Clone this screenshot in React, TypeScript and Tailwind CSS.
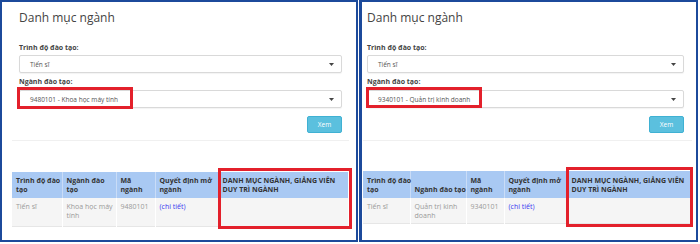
import React from 'react';

type PanelProps = {
  panelClass: string;
  formClass: string;
  tableWrapClass: string;
  tableClass: string;
  headClass: string;
  rowClass: string;
  cols: string[];
  headers: string[][];
  row: string[][];
  major: string;
  selectMark: string;
  tableMark: string;
};

const font = { fontFamily: '"Open Sans", "Noto Sans", Arial, sans-serif' };

function Caret() {
  return (
    <svg width="5" height="3" viewBox="0 0 5 3" className="shrink-0">
      <path d="M0 0 L5 0 L2.5 3 Z" fill="#444" />
    </svg>
  );
}

function SelectBox({ value }: { value: string }) {
  return (
    <div className="flex h-[18px] items-center justify-between rounded-[2px] border border-[#d9d9d9] bg-white pl-[10px] pr-[7px] shadow-[0_1px_1px_rgba(0,0,0,0.05)]">
      <span className="text-[6.5px] leading-[9px] text-[#555]">{value}</span>
      <Caret />
    </div>
  );
}

function Panel(p: PanelProps) {
  return (
    <div className={`relative h-[242px] shrink-0 border-[#1c4a9b] bg-white ${p.panelClass}`}>
      <div className={`flex flex-col pt-[8px] ${p.formClass}`}>
        <h1 className="text-[12px] leading-[16px] font-normal text-[#444]">Danh mục ngành</h1>
        <label className="mt-[17px] text-[7px] leading-[9px] font-bold text-[#444]">Trình độ đào tạo:</label>
        <div className="mt-[3px]">
          <SelectBox value="Tiến sĩ" />
        </div>
        <label className="mt-[4px] text-[7px] leading-[9px] font-bold text-[#444]">Ngành đào tạo:</label>
        <div className="mt-[4px]">
          <SelectBox value={p.major} />
        </div>
        <button className="mt-[8px] flex h-[17px] w-[35px] items-center justify-center self-end rounded-[2px] border border-[#3fb1d3] bg-[#5bc0de] text-[6.5px] text-white">
          Xem
        </button>
      </div>
      <div className={p.tableWrapClass}>
        <div className="mt-[7px] h-px bg-[#f0f0f0]" />
        <table className={`table-fixed border-collapse ${p.tableClass}`}>
          <colgroup>
            {p.cols.map((c, i) => (
              <col key={i} className={c} />
            ))}
          </colgroup>
          <thead>
            <tr className={`bg-[#a9c9f3] ${p.headClass}`}>
              {p.headers.map((lines, i) => (
                <th
                  key={i}
                  className="border-r border-[#c9dcf7] px-[4px] pb-[4px] text-left align-bottom text-[7px] leading-[9px] font-bold whitespace-nowrap text-[#333] last:border-r-0"
                >
                  {lines.map((l, j) => (
                    <div key={j}>{l}</div>
                  ))}
                </th>
              ))}
            </tr>
          </thead>
          <tbody>
            <tr className={`border-b border-[#e6e6e6] bg-[#f5f5f5] ${p.rowClass}`}>
              {p.row.map((lines, i) => (
                <td
                  key={i}
                  className={`border-r border-white px-[4px] pt-[4px] align-top text-[7px] leading-[9px] whitespace-nowrap last:border-r-0 ${
                    i === 3 ? 'text-[#3a3af0]' : 'text-[#9a9a9a]'
                  }`}
                >
                  {lines.map((l, j) => (
                    <div key={j}>{l}</div>
                  ))}
                </td>
              ))}
            </tr>
          </tbody>
        </table>
      </div>
      <div className={`pointer-events-none absolute border-[3px] border-[#e3202b] ${p.selectMark}`} />
      <div className={`pointer-events-none absolute border-[3px] border-[#e3202b] ${p.tableMark}`} />
    </div>
  );
}

export default function App() {
  return (
    <div className="flex h-[244px] w-[700px] bg-white" style={font}>
      <Panel
        panelClass="w-[358px] border-2"
        formClass="pl-[17px] pr-[14px]"
        tableWrapClass="pl-[10px] pr-[7px]"
        tableClass="mt-[31px] w-[336px]"
        headClass="h-[26px]"
        rowClass="h-[28px]"
        cols={['w-[50px]', 'w-[54px]', 'w-[39px]', 'w-[63px]', 'w-[130px]']}
        headers={[
          ['Trình độ đào', 'tạo'],
          ['Ngành đào', 'tạo'],
          ['Mã', 'ngành'],
          ['Quyết định mở', 'ngành'],
          ['DANH MỤC NGÀNH, GIẢNG VIÊN', 'DUY TRÌ NGÀNH'],
        ]}
        row={[['Tiến sĩ'], ['Khoa học máy', 'tính'], ['9480101'], ['(chi tiết)'], ['']]}
        major="9480101 - Khoa học máy tính"
        selectMark="left-[15px] top-[85px] h-[22px] w-[116px]"
        tableMark="left-[216px] top-[166px] h-[61px] w-[134px]"
      />
      <Panel
        panelClass="ml-px w-[339px] border-2 border-l-[3px]"
        formClass="pl-[5px] pr-[12px]"
        tableWrapClass="pl-[1px] pr-[4px]"
        tableClass="mt-[30px] w-[329px]"
        headClass="h-[27px]"
        rowClass="h-[25px]"
        cols={['w-[47px]', 'w-[56px]', 'w-[38px]', 'w-[63px]', 'w-[125px]']}
        headers={[
          ['Trình độ đào', 'tạo'],
          ['Ngành đào tạo'],
          ['Mã', 'ngành'],
          ['Quyết định mở', 'ngành'],
          ['DANH MỤC NGÀNH, GIẢNG VIÊN', 'DUY TRÌ NGÀNH'],
        ]}
        row={[['Tiến sĩ'], ['Quản trị kinh', 'doanh'], ['9340101'], ['(chi tiết)'], ['']]}
        major="9340101 - Quản trị kinh doanh"
        selectMark="left-[4px] top-[85px] h-[21px] w-[116px]"
        tableMark="left-[204px] top-[165px] h-[60px] w-[127px]"
      />
    </div>
  );
}
